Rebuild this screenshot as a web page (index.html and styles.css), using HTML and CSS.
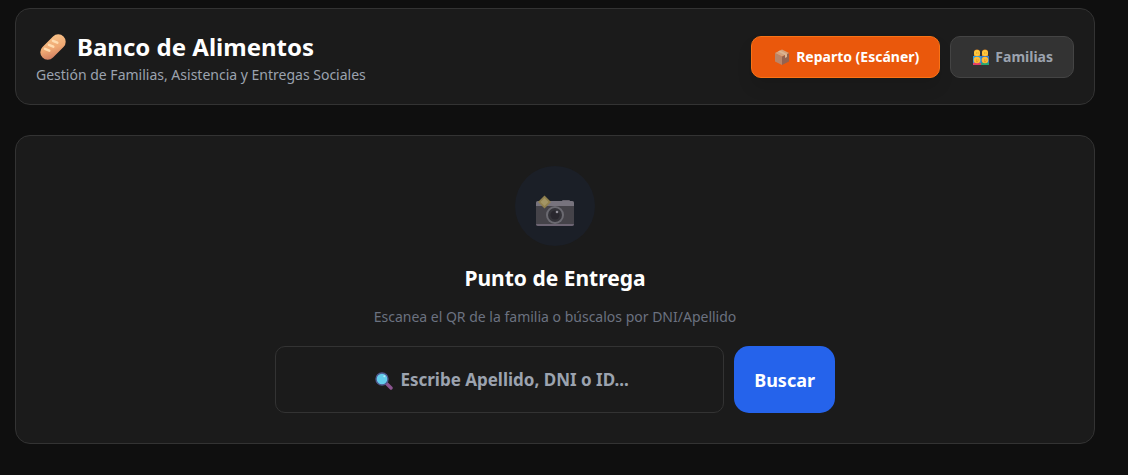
FILE: index.html
```html
<!DOCTYPE html>
<html lang="es">
<head>
<meta charset="utf-8">
<meta name="viewport" content="width=device-width, initial-scale=1">
<title>Banco de Alimentos</title>
<link rel="stylesheet" href="styles.css">
</head>
<body>
<header class="panel topbar">
  <div class="brand">
    <h1 class="brand-title">
      <svg class="icon-bread" viewBox="0 0 32 32" aria-hidden="true">
        <defs>
          <linearGradient id="crust" x1="1" y1="0" x2="0" y2="1">
            <stop offset="0" stop-color="#f8c48a"/><stop offset=".55" stop-color="#efa873"/><stop offset="1" stop-color="#c9745c"/>
          </linearGradient>
        </defs>
        <g transform="rotate(-45 16 16)">
          <rect x="-1" y="7.500" width="34" height="17" rx="8.500" fill="url(#crust)"/>
          <path d="M8 11l2 5M14.500 11l2 5M21 11l2 5" stroke="#ffdcb0" stroke-width="2.800" stroke-linecap="round"/>
        </g>
      </svg>
      Banco de Alimentos
    </h1>
    <p class="brand-text">Gestión de Familias, Asistencia y Entregas Sociales</p>
  </div>
  <nav class="tabs">
    <button class="tab tab-active" type="button">
      <svg class="icon-tab" viewBox="0 0 16 16" aria-hidden="true">
        <path d="M1 4l7 3.500V16l-7-3.500z" fill="#b98568"/>
        <path d="M15 4l-7 3.500V16l7-3.500z" fill="#94624f"/>
        <path d="M1 4l7-3.500L15 4 8 7.500z" fill="#d3a07c"/>
        <path d="M4 2.500L11 6v3l2-1V5L6 1.500z" fill="#dcb592"/>
      </svg>
      Reparto (Escáner)
    </button>
    <button class="tab" type="button">
      <svg class="icon-tab" viewBox="0 0 16 16" aria-hidden="true">
        <path d="M1 8V3.500a3 3 0 0 1 6 0V8z" fill="#e88b22"/><path d="M9 8V3.500a3 3 0 0 1 6 0V8z" fill="#e88b22"/>
        <path d="M0 7h8v9H0z" fill="#2e9be0"/><path d="M8 7h8v9H8z" fill="#3479c9"/>
        <path d="M0 16v-2q4-2 8 0v2z" fill="#e23e68"/><path d="M8 16v-2q4-2 8 0v2z" fill="#26a874"/>
        <circle cx="4" cy="4" r="3" fill="#ffc83d"/><circle cx="12" cy="4" r="3" fill="#ffc83d"/>
        <circle cx="4" cy="11" r="3.300" fill="#ffbd35"/><circle cx="12" cy="11" r="3.300" fill="#ffbd35"/>
        <path d="M3 4h.6M4.800 4h.6M11 4h.6M12.800 4h.6M3 11h.6M4.800 11h.6M11 11h.6M12.800 11h.6M3.500 12.700h1M11.500 12.700h1" stroke="#94541d" stroke-width=".7"/>
      </svg>
      Familias
    </button>
  </nav>
</header>

<main class="panel delivery">
  <div class="badge">
    <svg class="icon-camera" viewBox="0 0 40 34" aria-hidden="true">
      <rect x="27" y="4" width="8" height="3" rx="1" fill="#66626c"/>
      <rect x="1" y="5" width="38" height="25" rx="2" fill="#454349"/>
      <path d="M1 10V7q0-2 2-2h34q2 0 2 2v3z" fill="#77737d"/>
      <path d="M1 28h38q0 2-2 2H3q-2 0-2-2z" fill="#6d6573"/>
      <circle cx="20" cy="19" r="9" fill="#6b6a71"/>
      <circle cx="20" cy="19" r="7" fill="#35343a"/>
      <circle cx="20" cy="19" r="4.500" fill="#29272e"/>
      <circle cx="22" cy="16" r="1.300" fill="#93909a"/>
      <path d="M9.500-.5L16 6l-6.500 6.500L3 6z" fill="#90804e"/>
      <path d="M9.500 2L13.500 6l-4 4-4-4z" fill="#a39564"/>
    </svg>
  </div>
  <h2 class="delivery-title">Punto de Entrega</h2>
  <p class="delivery-text">Escanea el QR de la familia o búscalos por DNI/Apellido</p>
  <form class="search">
    <div class="search-field">
      <svg class="icon-search" viewBox="0 0 18 18" aria-hidden="true">
        <path d="M11.500 11.500l4.500 4.500" stroke="#8c5590" stroke-width="3.400" stroke-linecap="round"/>
        <circle cx="7" cy="7" r="6" fill="#63cdec" stroke="#50598f" stroke-width="1.400"/>
        <circle cx="9.300" cy="4.300" r="1" fill="#b6ecfa"/>
      </svg>
      <input class="search-input" type="text" placeholder="Escribe Apellido, DNI o ID..." aria-label="Apellido, DNI o ID">
    </div>
    <button class="search-button" type="submit">Buscar</button>
  </form>
</main>
</body>
</html>
```
FILE: styles.css
```css
* {
  box-sizing: border-box;
}

body {
  margin: 0;
  padding: 8px 33px 8px 15px;
  background: #0f0f0f;
  color: #fff;
  font-family: "Segoe UI", "Noto Sans", "Open Sans", sans-serif;
}

h1, h2, p {
  margin: 0;
}

button, input {
  font-family: inherit;
}

.panel {
  background: #1b1b1b;
  border: 1px solid #333;
  border-radius: 15px;
}

.topbar {
  display: flex;
  align-items: center;
  justify-content: space-between;
  gap: 20px;
  padding: 20px;
  margin-bottom: 30px;
}

.brand-title {
  display: flex;
  align-items: center;
  gap: 10px;
  padding-left: 3px;
  font-size: 24px;
  line-height: 36px;
}

.icon-bread {
  width: 28px;
  height: 28px;
}

.brand-text {
  color: #9ca3af;
  font-size: 14px;
  line-height: 19px;
}

.tabs {
  display: flex;
  gap: 10px;
}

.tab {
  display: flex;
  align-items: center;
  gap: 6px;
  padding: 10px 20px 10px 22px;
  border: 1px solid #444;
  border-radius: 10px;
  background: #333;
  color: #9ca3af;
  font-size: 14px;
  font-weight: 700;
  line-height: 20px;
}

.tab-active {
  border-color: #f97316;
  background: #ea580c;
  color: #fff;
  box-shadow: 0 10px 15px rgba(0, 0, 0, 0.1);
}

.icon-tab {
  width: 16px;
  height: 16px;
}

.delivery {
  display: flex;
  flex-direction: column;
  align-items: center;
  padding: 30px;
}

.badge {
  display: flex;
  align-items: center;
  justify-content: center;
  width: 80px;
  height: 80px;
  padding-top: 14px;
  border-radius: 50%;
  background: #1b1f27;
}

.icon-camera {
  width: 40px;
  height: 34px;
  overflow: visible;
}

.delivery-title {
  margin-top: 16px;
  font-size: 21px;
  line-height: 32px;
}

.delivery-text {
  margin: 12px 0 18px;
  color: #6b7280;
  font-size: 14px;
  line-height: 22px;
}

.search {
  display: flex;
  gap: 10px;
  width: 100%;
  max-width: 560px;
}

.search-field {
  position: relative;
  flex: 1;
}

.icon-search {
  position: absolute;
  top: 26px;
  left: calc(50% - 125px);
  width: 18px;
  height: 18px;
}

.search-input {
  width: 100%;
  height: 67px;
  padding: 0 20px 0 50px;
  border: 1px solid #333;
  border-radius: 10px;
  background: #1b1b1b;
  color: #fff;
  font-size: 17px;
  font-weight: 700;
  text-align: center;
}

.search-input::placeholder {
  color: #9ca3af;
  opacity: 1;
}

.search-button {
  padding: 0 20px;
  border: 0;
  border-radius: 15px;
  background: #2563eb;
  color: #fff;
  font-size: 18px;
  font-weight: 700;
}
```
